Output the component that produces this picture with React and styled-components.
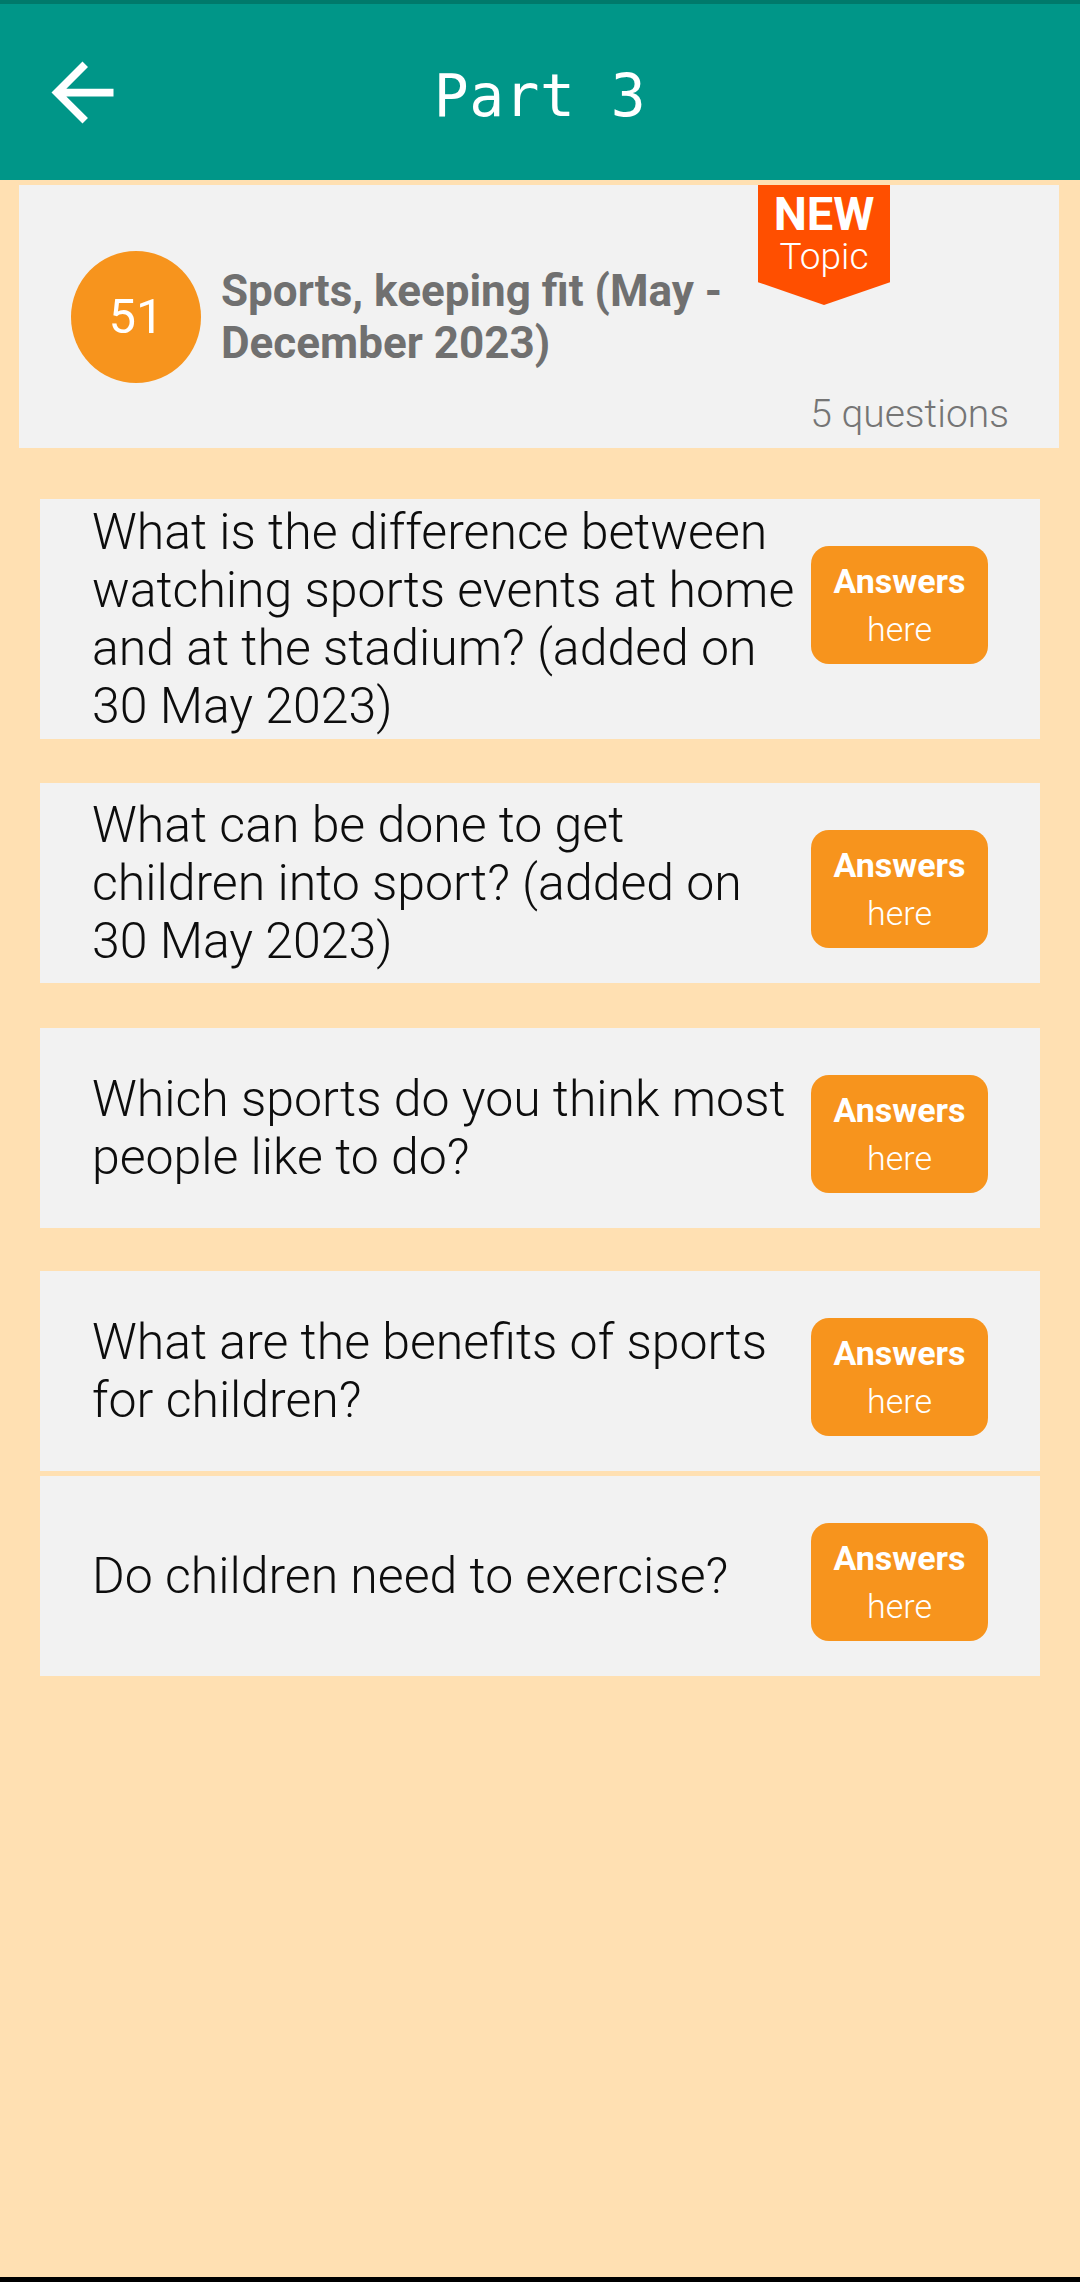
import React from 'react';
import styled, {createGlobalStyle} from 'styled-components';

const GlobalStyle = createGlobalStyle`
    html, body {
        margin: 0;
        padding: 0;
        background: #FFE0B2;
    }
    body {
        font-family: Roboto, "Noto Sans", "Liberation Sans", sans-serif;
    }
`;

const questions = [
    {text: 'What is the difference between watching sports events at home and at the stadium? (added on 30 May 2023)', gap: 51},
    {text: 'What can be done to get children into sport? (added on 30 May 2023)', gap: 44},
    {text: 'Which sports do you think most people like to do?', gap: 45},
    {text: 'What are the benefits of sports for children?', gap: 43},
    {text: 'Do children need to exercise?', gap: 5},
];

const Page = styled.div`
    display: flex;
    flex-direction: column;
    height: 2282px;
    background: #FFE0B2;
`;

const StatusStrip = styled.div`
    height: 4px;
    background: #00796B;
`;

const Toolbar = styled.header`
    height: 176px;
    background: #009688;
    display: grid;
    grid-template-columns: 1fr auto 1fr;
    align-items: center;
`;

const BackButton = styled.button`
    justify-self: start;
    margin-left: 36px;
    padding: 0;
    border: 0;
    background: none;
    display: flex;
    width: 93px;
    height: 93px;
    cursor: pointer;
`;

const Title = styled.h1`
    margin: 0;
    padding-top: 8px;
    font-family: "DejaVu Sans Mono", "Liberation Mono", monospace;
    font-weight: 400;
    font-size: 58px;
    color: #fff;
    letter-spacing: 0.5px;
`;

const Content = styled.main`
    flex: 1;
    padding: 5px 21px 0 19px;
`;

const TopicCard = styled.section`
    position: relative;
    height: 263px;
    background: #F2F2F2;
    display: flex;
    align-items: center;
    padding-left: 52px;
    box-sizing: border-box;
`;

const Badge = styled.div`
    width: 130px;
    height: 132px;
    border-radius: 50%;
    background: #F7941D;
    color: #fff;
    display: flex;
    align-items: center;
    justify-content: center;
    font-size: 49px;
    font-weight: 400;
    flex-shrink: 0;
`;

const TopicTitle = styled.div`
    margin-left: 20px;
    width: 530px;
    font-size: 44px;
    line-height: 52px;
    font-weight: 700;
    color: #707070;
`;

const NewRibbon = styled.div`
    position: absolute;
    left: 739px;
    top: 0;
    width: 132px;
    height: 120px;
    background: #FF4F00;
    clip-path: polygon(0 0, 100% 0, 100% 81%, 50% 100%, 0 81%);
    color: #fff;
    text-align: center;
    padding-top: 8px;
    box-sizing: border-box;
`;

const RibbonBig = styled.div`
    font-size: 47px;
    line-height: 42px;
    font-weight: 700;
`;

const RibbonSmall = styled.div`
    font-size: 37px;
    line-height: 36px;
    font-weight: 300;
    margin-top: 4px;
`;

const Count = styled.div`
    position: absolute;
    right: 50px;
    bottom: 12px;
    font-size: 39px;
    line-height: 44px;
    font-weight: 300;
    color: #757575;
`;

const List = styled.div`
    padding: 0 0 0 21px;
    width: 1000px;
`;

const QuestionRow = styled.div`
    margin-top: ${(props) => props.$gap}px;
    background: #F2F2F2;
    display: flex;
    align-items: center;
    padding: 4px 52px 4px 52px;
    gap: 15px;
`;

const QuestionText = styled.div`
    flex: 1;
    font-size: 50px;
    line-height: 58px;
    font-weight: 300;
    color: #0d0d0d;
`;

const AnswerButton = styled.button`
    align-self: flex-start;
    margin: 43px 0 31px;
    width: 177px;
    height: 118px;
    flex-shrink: 0;
    border: 0;
    border-radius: 18px;
    background: #F7941D;
    color: #fff;
    font-family: inherit;
    font-size: 34px;
    line-height: 48px;
    padding: 0;
    display: flex;
    flex-direction: column;
    align-items: center;
    justify-content: center;
    cursor: pointer;
`;

const Strong = styled.span`
    font-weight: 700;
`;

const Light = styled.span`
    font-weight: 300;
    font-size: 34px;
`;

const NavEdge = styled.div`
    height: 5px;
    background: #000;
`;

const ArrowBack = () => (
    <svg width="93" height="93" viewBox="0 0 24 24" fill="#fff">
        <path d="M20 11H7.83l5.59-5.59L12 4l-8 8 8 8 1.41-1.41L7.83 13H20v-2z" />
    </svg>
);

export const Question = ({text, gap}) => (
    <QuestionRow $gap={gap}>
        <QuestionText>{text}</QuestionText>
        <AnswerButton>
            <Strong>Answers</Strong>
            <Light>here</Light>
        </AnswerButton>
    </QuestionRow>
);

export const App = () => {
    return (
        <Page>
            <GlobalStyle />
            <StatusStrip />
            <Toolbar>
                <BackButton aria-label="Back"><ArrowBack /></BackButton>
                <Title>Part 3</Title>
                <div />
            </Toolbar>
            <Content>
                <TopicCard>
                    <Badge>51</Badge>
                    <TopicTitle>Sports, keeping fit (May - December 2023)</TopicTitle>
                    <NewRibbon>
                        <RibbonBig>NEW</RibbonBig>
                        <RibbonSmall>Topic</RibbonSmall>
                    </NewRibbon>
                    <Count>5 questions</Count>
                </TopicCard>
                <List>
                    {questions.map((q) => <Question key={q.text} text={q.text} gap={q.gap} />)}
                </List>
            </Content>
            <NavEdge />
        </Page>
    );
};

export default App;
